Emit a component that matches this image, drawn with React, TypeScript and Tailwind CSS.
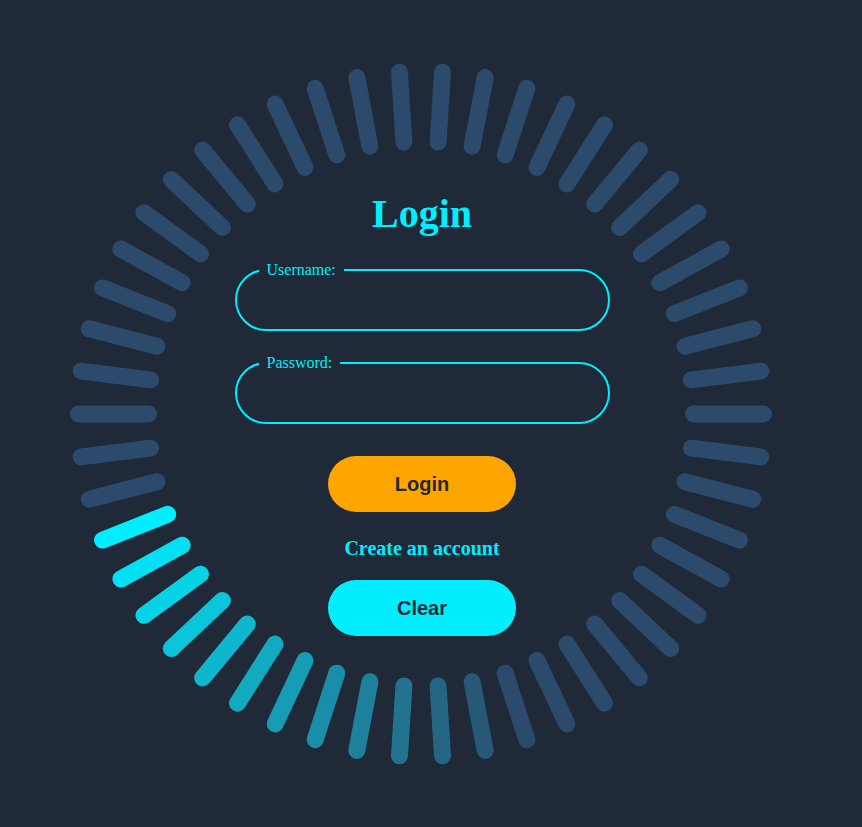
import React from "react";

const BRIGHT = [0, 238, 255];
const DIM = [44, 74, 107];

function mix(t: number) {
  const c = BRIGHT.map((b, j) => Math.round(b + (DIM[j] - b) * t));
  return `rgb(${c[0]},${c[1]},${c[2]})`;
}

function Ring() {
  const C = 352;
  const r1 = 272.5;
  const r2 = 342.5;
  const bars = Array.from({ length: 50 }, (_, i) => {
    const deg = 3.6 + 7.2 * i;
    const rad = (deg * Math.PI) / 180;
    const s = Math.sin(rad);
    const c = Math.cos(rad);
    const k = 34 - i;
    const color = k >= 0 && k < 12 ? mix(k / 12) : mix(1);
    return (
      <line
        key={i}
        x1={C + r1 * s}
        y1={C - r1 * c}
        x2={C + r2 * s}
        y2={C - r2 * c}
        stroke={color}
        strokeWidth={17}
        strokeLinecap="round"
      />
    );
  });
  return (
    <svg width={704} height={704} viewBox="0 0 704 704" className="col-start-1 row-start-1">
      {bars}
    </svg>
  );
}

function Field({ label, type }: { label: string; type: string }) {
  return (
    <fieldset className="w-[375px] border-2 border-[#00eeff] rounded-full px-[22px]">
      <legend className="px-2 text-[16px] leading-[18px] text-[#00eeff] font-['Liberation_Serif',serif]">
        {label}
      </legend>
      <input
        type={type}
        className="block h-[50px] w-full bg-transparent outline-none text-white text-[16px]"
      />
    </fieldset>
  );
}

export default function App() {
  return (
    <div className="min-h-screen bg-[#1f2937] flex items-center justify-center pr-5">
      <div className="grid place-items-center">
        <Ring />
        <form
          className="col-start-1 row-start-1 ml-[2px] mb-[2px] flex flex-col items-center w-[375px]"
          onSubmit={(e) => e.preventDefault()}
        >
          <h1 className="text-[40px] leading-[48px] font-bold text-[#00eeff] font-['Liberation_Serif',serif]">
            Login
          </h1>
          <div className="mt-[23px]">
            <Field label="Username:" type="text" />
          </div>
          <div className="mt-[23px]">
            <Field label="Password:" type="password" />
          </div>
          <button
            type="submit"
            className="mt-[32px] w-[188px] h-[56px] rounded-full bg-[#ffa500] text-[20px] font-bold text-[#1f2937] font-['Liberation_Sans',Arial,sans-serif]"
          >
            Login
          </button>
          <a
            href="#"
            className="mt-[24px] text-[20px] leading-[24px] font-bold text-[#00eeff] font-['Liberation_Serif',serif]"
          >
            Create an account
          </a>
          <button
            type="reset"
            className="mt-[20px] w-[188px] h-[56px] rounded-full bg-[#00eeff] text-[20px] font-bold text-[#1f2937] font-['Liberation_Sans',Arial,sans-serif]"
          >
            Clear
          </button>
        </form>
      </div>
    </div>
  );
}
